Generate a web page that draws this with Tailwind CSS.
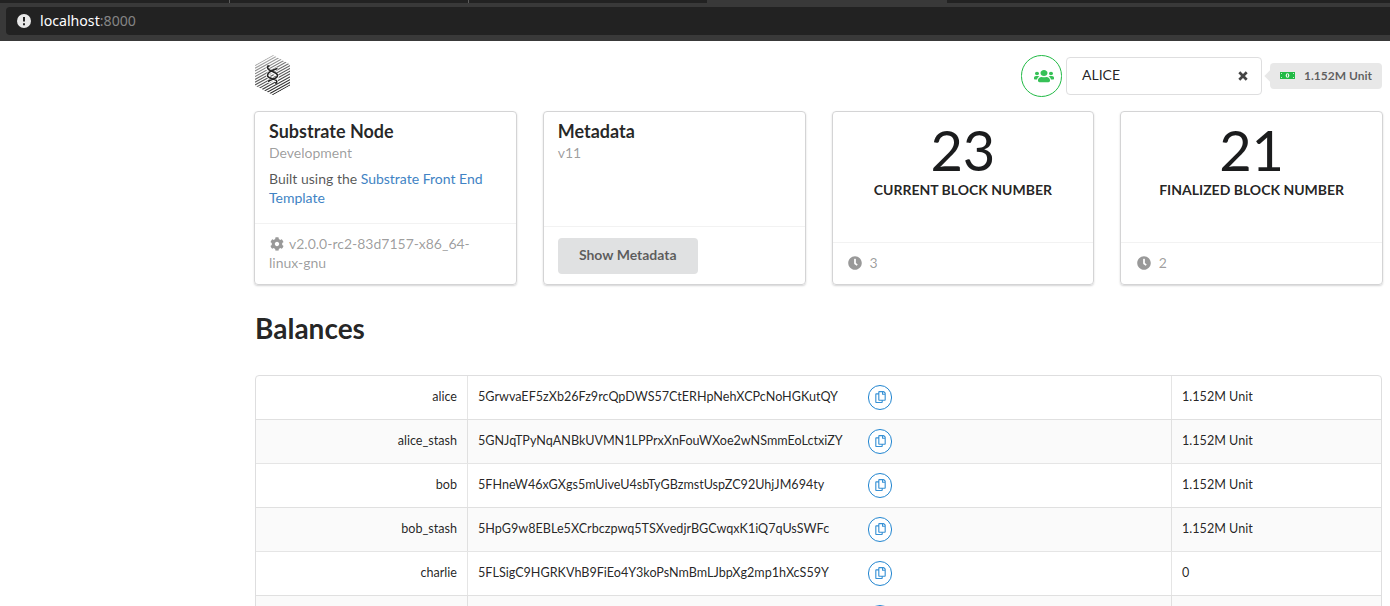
<!DOCTYPE html>
<html lang="en">
<head>
<meta charset="utf-8">
<title>Substrate Front End Template</title>
<script src="https://cdn.jsdelivr.net/npm/@tailwindcss/browser@4"></script>
</head>
<body class="h-[606px] overflow-hidden bg-white font-[Lato,sans-serif] text-sm leading-[20px] text-black/87">
<svg class="hidden">
  <symbol id="copy" viewBox="0 0 448 512"><path d="M433.941 65.941l-51.882-51.882A48 48 0 0 0 348.118 0H176c-26.51 0-48 21.49-48 48v48H48c-26.51 0-48 21.49-48 48v320c0 26.51 21.49 48 48 48h224c26.51 0 48-21.49 48-48v-48h80c26.51 0 48-21.49 48-48V99.882a48 48 0 0 0-14.059-33.941zM266 464H54a6 6 0 0 1-6-6V150a6 6 0 0 1 6-6h74v224c0 26.51 21.49 48 48 48h96v42a6 6 0 0 1-6 6zm128-96H182a6 6 0 0 1-6-6V54a6 6 0 0 1 6-6h106v88c0 13.255 10.745 24 24 24h88v202a6 6 0 0 1-6 6zm6-256h-64V48h9.632c1.591 0 3.117.632 4.243 1.757l48.368 48.368a6 6 0 0 1 1.757 4.243V112z"/></symbol>
  <symbol id="clock" viewBox="0 0 512 512"><path d="M256,8C119,8,8,119,8,256S119,504,256,504,504,393,504,256,393,8,256,8Zm92.49,313h0l-20,25a16,16,0,0,1-22.49,2.5h0l-67-49.72a40,40,0,0,1-15-31.23V112a16,16,0,0,1,16-16h32a16,16,0,0,1,16,16V256l58,42.5A16,16,0,0,1,348.49,321Z"/></symbol>
</svg>

<!-- Browser bar -->
<div class="flex h-[41px] flex-col bg-[#393939]">
  <div class="flex h-[3px] shrink-0">
    <div class="w-[230px] border-r border-[#5c5c5c] bg-[#222]"></div>
    <div class="w-[239px] border-r border-[#5c5c5c] bg-[#222]"></div>
    <div class="w-[238px] bg-[#222]"></div>
    <div class="w-[240px]"></div>
    <div class="grow bg-[#222]"></div>
  </div>
  <div class="mt-1 ml-1.5 flex h-7 items-center rounded-l bg-[#222] pl-[11px]">
    <svg class="size-[14px]" viewBox="0 0 14 14"><circle cx="7" cy="7" r="7" fill="#e8e8e8"/><path d="M7 3v4.6M7 9.3v1.9" stroke="#222" stroke-width="2"/></svg>
    <span class="ml-[9px] font-['Noto_Sans'] text-[14.15px] text-white">localhost<span class="text-[#858585]">:8000</span></span>
  </div>
</div>

<div class="ml-[254px] w-[1129px]">
  <!-- Account selector -->
  <header class="flex h-[70px] items-start pt-[14px]">
    <svg class="ml-px h-10 w-9" viewBox="0 0 36 40">
      <defs>
        <clipPath id="hex"><path d="M18 0L35 9.500V30.500L18 40L0 30.500V10Z"/></clipPath>
        <linearGradient id="fade" x1="8" y1="0" x2="26" y2="40" gradientUnits="userSpaceOnUse"><stop offset="0" stop-color="#ccc"/><stop offset=".35" stop-color="#777"/><stop offset="1" stop-color="#111"/></linearGradient>
      </defs>
      <g clip-path="url(#hex)"><path stroke="url(#fade)" stroke-width="1.100" fill="none" d="M0 10.4l36-20M0 13.2l36-20M0 16l36-20M0 18.8l36-20M0 21.6l36-20M0 24.4l36-20M0 27.2l36-20M0 30l36-20M0 32.8l36-20M0 35.6l36-20M0 38.4l36-20M0 41.2l36-20M0 44l36-20M0 46.8l36-20M0 49.6l36-20"/></g>
      <g fill="none">
        <path d="M12 12.500c0 5 10.500 4.500 10.500 9 0 3-5 2.500-9.500 5.500M22.500 13.500c-4 2-10 3.500-10 7 0 4 9.500 2.500 9.500 7" stroke="#fff" stroke-width="3"/>
        <path d="M14.500 11h-1.500c-3 5 9.500 5.500 9.500 9.500 0 3.500-5.500 3-9.500 6M22.500 13.500c-4 1.500-10 3-10 7 0 4 11.500 2.500 9 7.500h-1.500" stroke="#222" stroke-width="1.600"/>
      </g>
    </svg>
    <div class="ml-auto flex">
      <div class="flex h-[42px] w-[41px] items-center justify-center rounded-full border border-[#21ba45]">
        <svg class="ml-1 h-[14px] w-5 fill-[#21ba45]/90" viewBox="0 0 640 512" preserveAspectRatio="none"><path d="M96 224c35.3 0 64-28.7 64-64s-28.7-64-64-64-64 28.7-64 64 28.7 64 64 64zm448 0c35.3 0 64-28.7 64-64s-28.7-64-64-64-64 28.7-64 64 28.7 64 64 64zm32 32h-64c-17.6 0-33.5 7.1-45.1 18.6 40.3 22.1 68.9 62 75.1 109.4h66c17.7 0 32-14.3 32-32v-32c0-35.3-28.7-64-64-64zm-256 0c61.9 0 112-50.1 112-112S381.9 32 320 32 208 82.1 208 144s50.1 112 112 112zm76.8 32h-8.3c-20.8 10-43.9 16-68.5 16s-47.6-6-68.5-16h-8.3C179.6 288 128 339.6 128 403.2V432c0 26.5 21.5 48 48 48h288c26.5 0 48-21.5 48-48v-28.8c0-63.6-51.6-115.2-115.2-115.2zm-223.7-13.4C161.5 263.1 145.6 256 128 256H64c-35.3 0-64 28.7-64 64v32c0 17.7 14.3 32 32 32h65.9c6.3-47.4 34.9-87.3 75.2-109.4z"/></svg>
      </div>
      <div class="mt-0.5 ml-1 flex h-[38px] w-[196px] items-center rounded border border-[#dededf] pr-[13px] pl-[15px]">
        <span class="-mt-0.5">ALICE</span>
        <svg class="ml-auto size-[10px]" viewBox="0 0 10 10"><path d="M1.300 1.300l7.400 7.400M8.700 1.300L1.300 8.700" stroke="#444" stroke-width="2.700"/></svg>
      </div>
      <div class="relative mt-2 ml-2 flex h-[26px] w-[112px] items-center rounded bg-[#e8e8e8] pl-[10px]">
        <span class="absolute top-[9px] -left-1 size-2 rotate-45 bg-[#e8e8e8]"></span>
        <svg class="-mt-px h-[7px] w-[15px]" viewBox="0 0 15 7"><path d="M0 0h15v7H0z" fill="#21ba45"/><ellipse cx="7.500" cy="3.500" rx="1.800" ry="2.300" fill="#e8f5ea"/><path d="M7.500 2.300v2.400" stroke="#21ba45"/><path d="M1 1.500h1M1 5.500h1M13 1.500h1M13 5.500h1" stroke="#c9eccf"/></svg>
        <span class="ml-[9px] text-xs font-bold text-black/60">1.152M Unit</span>
      </div>
      <div class="w-px"></div>
    </div>
  </header>

  <!-- Node cards -->
  <section class="grid h-[174px] grid-cols-4 gap-x-[26px]">
    <article class="flex flex-col rounded border border-[#d4d4d5] shadow-[0_1px_2px_0_#d4d4d5]">
      <div class="grow px-[14px] pt-2">
        <h2 class="text-[18px] leading-[23px] font-bold text-black/85">Substrate Node</h2>
        <p class="text-black/40">Development</p>
        <p class="mt-[6px] leading-[19px] text-black/68">Built using the <a class="text-[#4183c4]">Substrate Front End Template</a></p>
      </div>
      <div class="h-[61px] border-t border-black/5 px-[14px] pt-[10px] leading-[19px] text-black/40"><svg class="mr-[5px] ml-px inline size-[14px] -translate-y-px fill-[#999]" viewBox="0 0 512 512"><path d="M487.4 315.7l-42.6-24.6c4.3-23.2 4.3-47 0-70.2l42.6-24.6c4.9-2.8 7.1-8.6 5.5-14-11.1-35.6-30-67.8-54.7-94.6-3.8-4.1-10-5.1-14.8-2.3L380.8 110c-17.9-15.4-38.5-27.3-60.8-35.1V25.8c0-5.6-3.9-10.5-9.4-11.7-36.700-8.200-74.300-7.800-109.200 0-5.500 1.200-9.400 6.100-9.400 11.700V75c-22.200 7.900-42.800 19.800-60.800 35.100L88.700 85.500c-4.900-2.800-11-1.900-14.800 2.300-24.700 26.700-43.600 58.900-54.700 94.600-1.700 5.400.6 11.200 5.500 14L67.300 221c-4.300 23.200-4.300 47 0 70.200l-42.600 24.600c-4.900 2.800-7.100 8.600-5.500 14 11.100 35.600 30 67.800 54.700 94.600 3.800 4.100 10 5.100 14.800 2.300l42.600-24.600c17.900 15.400 38.500 27.300 60.800 35.100v49.200c0 5.600 3.900 10.500 9.400 11.700 36.700 8.200 74.300 7.800 109.200 0 5.500-1.200 9.400-6.100 9.400-11.700v-49.200c22.200-7.900 42.800-19.800 60.800-35.100l42.600 24.600c4.900 2.800 11 1.900 14.800-2.300 24.700-26.700 43.600-58.900 54.700-94.600 1.500-5.500-.7-11.300-5.600-14.100zM256 336c-44.100 0-80-35.900-80-80s35.900-80 80-80 80 35.900 80 80-35.900 80-80 80z"/></svg>v2.0.0-rc2-83d7157-x86_64-<br>linux-gnu</div>
    </article>
    <article class="flex flex-col rounded border border-[#d4d4d5] shadow-[0_1px_2px_0_#d4d4d5]">
      <div class="grow px-[14px] pt-2">
        <h2 class="text-[18px] leading-[23px] font-bold text-black/85">Metadata</h2>
        <p class="text-black/40">v11</p>
      </div>
      <div class="h-[58px] border-t border-black/5 px-[14px] pt-[11px]">
        <button class="block h-9 w-[140px] rounded bg-[#e0e1e2] pb-0.5 font-bold text-black/60">Show Metadata</button>
      </div>
    </article>
    <article class="flex flex-col rounded border border-[#d4d4d5] shadow-[0_1px_2px_0_#d4d4d5]">
      <div class="grow pt-[10px] text-center">
        <div class="text-[56px] leading-[56px] text-[#1b1c1d]">23</div>
        <div class="mt-0.5 font-bold">CURRENT BLOCK NUMBER</div>
      </div>
      <div class="flex h-[42px] items-center border-t border-black/5 px-[15px] pb-0.5 text-black/40"><svg class="mr-2 size-[14px] fill-[#999]"><use href="#clock"/></svg>3</div>
    </article>
    <article class="flex flex-col rounded border border-[#d4d4d5] shadow-[0_1px_2px_0_#d4d4d5]">
      <div class="grow pt-[10px] text-center">
        <div class="text-[56px] leading-[56px] text-[#1b1c1d]">21</div>
        <div class="mt-0.5 font-bold">FINALIZED BLOCK NUMBER</div>
      </div>
      <div class="flex h-[42px] items-center border-t border-black/5 px-[15.500px] pb-0.5 text-black/40"><svg class="mr-2 size-[14px] fill-[#999]"><use href="#clock"/></svg>2</div>
    </article>
  </section>

  <!-- Balances -->
  <h1 class="mt-[25px] ml-px text-[28px] leading-9 font-bold">Balances</h1>
  <div class="mt-[29px] ml-px w-[1127px] rounded-t border border-[#dededf] text-[12.6px]">
    <div class="grid h-[43px] grid-cols-[212px_704px_1fr]">
      <div class="border-r border-black/10 pt-[11px] pr-[10px] text-right">alice</div>
      <div class="flex border-r border-black/10 pl-[10px]"><span class="w-[390px] pt-[11px]">5GrwvaEF5zXb26Fz9rcQpDWS57CtERHpNehXCPcNoHGKutQY</span><span class="mt-[9px] flex h-[25px] w-6 items-center justify-center rounded-full border border-[#2185d0]"><svg class="mb-0.5 ml-px h-3 w-[11px] fill-[#2185d0]/90"><use href="#copy"/></svg></span></div>
      <div class="pt-[11px] pl-[10px]">1.152M Unit</div>
    </div>
    <div class="grid h-11 grid-cols-[212px_704px_1fr] border-t border-black/10 bg-[#fafafa]">
      <div class="border-r border-black/10 pt-[11px] pr-[10px] text-right">alice_stash</div>
      <div class="flex border-r border-black/10 pl-[10px]"><span class="w-[390px] pt-[11px]">5GNJqTPyNqANBkUVMN1LPPrxXnFouWXoe2wNSmmEoLctxiZY</span><span class="mt-[9px] flex h-[25px] w-6 items-center justify-center rounded-full border border-[#2185d0] bg-white"><svg class="mb-0.5 ml-px h-3 w-[11px] fill-[#2185d0]/90"><use href="#copy"/></svg></span></div>
      <div class="pt-[11px] pl-[10px]">1.152M Unit</div>
    </div>
    <div class="grid h-11 grid-cols-[212px_704px_1fr] border-t border-black/10">
      <div class="border-r border-black/10 pt-[11px] pr-[10px] text-right">bob</div>
      <div class="flex border-r border-black/10 pl-[10px]"><span class="w-[390px] pt-[11px]">5FHneW46xGXgs5mUiveU4sbTyGBzmstUspZC92UhjJM694ty</span><span class="mt-[9px] flex h-[25px] w-6 items-center justify-center rounded-full border border-[#2185d0]"><svg class="mb-0.5 ml-px h-3 w-[11px] fill-[#2185d0]/90"><use href="#copy"/></svg></span></div>
      <div class="pt-[11px] pl-[10px]">1.152M Unit</div>
    </div>
    <div class="grid h-11 grid-cols-[212px_704px_1fr] border-t border-black/10 bg-[#fafafa]">
      <div class="border-r border-black/10 pt-[11px] pr-[10px] text-right">bob_stash</div>
      <div class="flex border-r border-black/10 pl-[10px]"><span class="w-[390px] pt-[11px]">5HpG9w8EBLe5XCrbczpwq5TSXvedjrBGCwqxK1iQ7qUsSWFc</span><span class="mt-[9px] flex h-[25px] w-6 items-center justify-center rounded-full border border-[#2185d0] bg-white"><svg class="mb-0.5 ml-px h-3 w-[11px] fill-[#2185d0]/90"><use href="#copy"/></svg></span></div>
      <div class="pt-[11px] pl-[10px]">1.152M Unit</div>
    </div>
    <div class="grid h-11 grid-cols-[212px_704px_1fr] border-t border-black/10">
      <div class="border-r border-black/10 pt-[11px] pr-[10px] text-right">charlie</div>
      <div class="flex border-r border-black/10 pl-[10px]"><span class="w-[390px] pt-[11px]">5FLSigC9HGRKVhB9FiEo4Y3koPsNmBmLJbpXg2mp1hXcS59Y</span><span class="mt-[9px] flex h-[25px] w-6 items-center justify-center rounded-full border border-[#2185d0]"><svg class="mb-0.5 ml-px h-3 w-[11px] fill-[#2185d0]/90"><use href="#copy"/></svg></span></div>
      <div class="pt-[11px] pl-[10px]">0</div>
    </div>
    <div class="grid h-11 grid-cols-[212px_704px_1fr] border-t border-black/10 bg-[#fafafa]">
      <div class="border-r border-black/10"></div>
      <div class="flex border-r border-black/10 pl-[400px]"><span class="mt-[9px] h-[25px] w-6 rounded-full border border-[#2185d0] bg-white"></span></div>
      <div></div>
    </div>
  </div>
</div>
</body>
</html>
